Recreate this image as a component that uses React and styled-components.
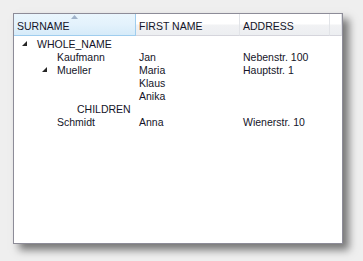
import React from 'react';
import styled, { createGlobalStyle } from 'styled-components';

const Global = createGlobalStyle`
  html, body { margin: 0; padding: 0; background: #efefef; }
  body { font-family: "Liberation Sans", Arial, sans-serif; }
`

const Page = styled.div`
  width: 363px;
  height: 261px;
  padding: 13px 0 0 13px;
  box-sizing: border-box;
`

const Panel = styled.div`
  width: 330px;
  height: 231px;
  box-sizing: border-box;
  background: #fff;
  border: 1px solid #8d8c98;
  box-shadow: 6px 6px 8px rgba(0, 0, 0, 0.5);
`

const cols = '122px 104px 90px 1fr'

const Header = styled.div`
  display: grid;
  grid-template-columns: ${cols};
  height: 22px;
`

const HeadCell = styled.div`
  position: relative;
  display: flex;
  align-items: center;
  padding-left: 3px;
  padding-top: 2px;
  box-sizing: border-box;
  font-size: 10.5px;
  color: #141428;
  background: ${p => p.$active
    ? 'linear-gradient(#eaf6fd 0%, #e3f2fc 50%, #d6ebf9 100%)'
    : 'linear-gradient(#ffffff 0%, #ffffff 45%, #f1f2f4 55%, #eceef1 100%)'};
  border-right: 1px solid ${p => p.$active ? '#9fcdee' : '#e2e4e8'};
  border-bottom: 1px solid ${p => p.$active ? '#9fcdee' : '#d5d5dc'};
`

const SortArrow = styled.svg`
  position: absolute;
  top: 1px;
  left: 57px;
`

const Body = styled.div`
  padding-top: 1px;
`

const Row = styled.div`
  display: grid;
  grid-template-columns: ${cols};
  height: 13px;
  align-items: center;
  font-size: 10.5px;
  color: #141428;
  white-space: nowrap;
`

const TreeCell = styled.div`
  display: flex;
  align-items: center;
  padding-left: ${p => 8 + p.$level * 20}px;
`

const Toggle = styled.span`
  width: 15px;
  flex: none;
  display: flex;
  align-items: center;
`

const Cell = styled.div`
  padding-left: 3px;
`

const Expanded = () => (
  <svg width="5" height="5" viewBox="0 0 5 5">
    <polygon points="5,0 5,5 0,5" fill="#262626" />
  </svg>
)

const rows = [
  { level: 0, open: true, name: 'WHOLE_NAME' },
  { level: 1, name: 'Kaufmann', first: 'Jan', addr: 'Nebenstr. 100' },
  { level: 1, open: true, name: 'Mueller', first: 'Maria', addr: 'Hauptstr. 1' },
  { level: 2, name: '', first: 'Klaus' },
  { level: 2, name: '', first: 'Anika' },
  { level: 2, name: 'CHILDREN' },
  { level: 1, name: 'Schmidt', first: 'Anna', addr: 'Wienerstr. 10' },
]

const App = () => {
  return (
    <>
      <Global />
      <Page>
        <Panel>
          <Header>
            <HeadCell $active>
              SURNAME
              <SortArrow width="7" height="4" viewBox="0 0 7 4">
                <polygon points="3.5,0 7,4 0,4" fill="#9fb2c9" />
              </SortArrow>
            </HeadCell>
            <HeadCell>FIRST NAME</HeadCell>
            <HeadCell>ADDRESS</HeadCell>
            <HeadCell />
          </Header>
          <Body>
            {rows.map((r, i) => (
              <Row key={i}>
                <TreeCell $level={r.level}>
                  <Toggle>{r.open && <Expanded />}</Toggle>
                  {r.name}
                </TreeCell>
                <Cell>{r.first}</Cell>
                <Cell>{r.addr}</Cell>
                <Cell />
              </Row>
            ))}
          </Body>
        </Panel>
      </Page>
    </>
  )
}

export default App;
